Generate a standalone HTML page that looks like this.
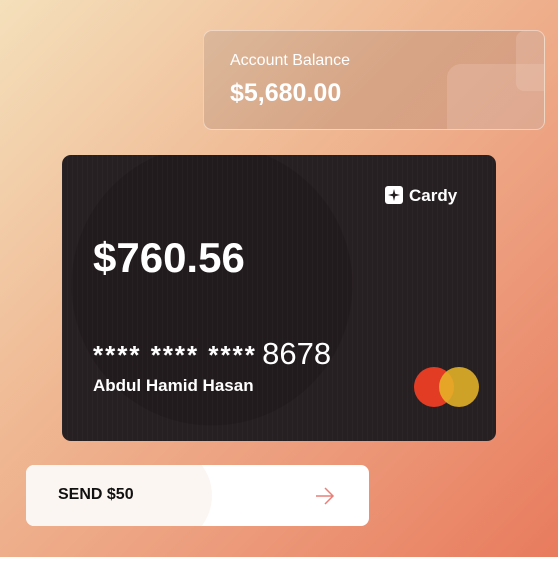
<!DOCTYPE html>
<html><head><style>
html,body{margin:0;padding:0;width:558px;height:565px;background:#fff;overflow:hidden;font-family:"Liberation Sans",sans-serif}
.bg{position:absolute;left:0;top:0;width:558px;height:557px;background:linear-gradient(135deg,#f4e0bb 0%,#efb893 40%,#ec9a7a 70%,#e87b5d 100%)}
.acc{position:absolute;left:203px;top:30px;width:342px;height:100px;border-radius:9px;background:linear-gradient(135deg,#dcb89a 0%,#d7a586 50%,#d89c81 100%);border:1.5px solid rgba(255,240,230,.6);box-sizing:border-box;overflow:hidden}
.acc .s1{position:absolute;left:243px;top:33px;width:120px;height:80px;border-radius:14px;background:rgba(255,230,215,.18)}
.acc .s2{position:absolute;left:312px;top:0;width:40px;height:60px;border-radius:8px;background:rgba(255,230,215,.18)}
.acc .t{position:absolute;left:26px;top:21px;color:#fff;font-size:16px}
.acc .v{position:absolute;left:26px;top:48px;color:#fff;font-size:25px;font-weight:bold}
.card{position:absolute;left:62px;top:155px;width:434px;height:286px;border-radius:9px;overflow:hidden;
background-image:repeating-linear-gradient(90deg,rgba(255,255,255,.025) 0 1px,transparent 1px 5px),radial-gradient(circle at 150px 130px,#221b1d 0 140px,transparent 141px);background-color:#272022}
.logo{position:absolute;left:323px;top:31px;color:#fff;font-weight:bold;font-size:17px}
.logo i{display:inline-block;width:18px;height:18px;background:#fff;border-radius:3px;vertical-align:-3px;margin-right:6px;position:relative}
.amt{position:absolute;left:31px;top:79px;color:#fff;font-size:42px;font-weight:bold}
.num{position:absolute;left:31px;top:181px;color:#fff;font-size:26px;letter-spacing:2px;font-weight:bold;white-space:nowrap}
.num b{font-size:31px;font-weight:normal;letter-spacing:0;margin-left:-4px}
.name{position:absolute;left:31px;top:221px;color:#fff;font-size:17px;font-weight:bold}
.c{position:absolute;width:40px;height:40px;border-radius:50%;top:212px}
.btn{position:absolute;left:26px;top:465px;width:343px;height:61px;border-radius:8px;background:#fff;overflow:hidden}
.btn .h{position:absolute;left:-20px;top:-20px;width:206px;height:101px;border-radius:0 60px 60px 0;background:#fcf6f3}
.btn span{position:absolute;left:32px;top:21px;font-size:16px;font-weight:bold;color:#111}
</style></head><body>
<div class="bg"></div>
<div class="acc"><div class="s1"></div><div class="s2"></div><div class="t">Account Balance</div><div class="v">$5,680.00</div></div>
<div class="card">
<div class="logo"><i><svg width="18" height="18" viewBox="0 0 18 18" style="position:absolute;left:0;top:0"><path d="M9 3 L10.2 7.8 L15 9 L10.2 10.2 L9 15 L7.8 10.2 L3 9 L7.8 7.8 Z" fill="#241d20"/></svg></i>Cardy</div>
<div class="amt">$760.56</div>
<div class="num">**** **** **** <b>8678</b></div>
<div class="name">Abdul Hamid Hasan</div>
<div class="c" style="left:352px;background:#e23c24"></div>
<div class="c" style="left:377px;background:rgba(230,180,40,.88)"></div>
</div>
<div class="btn"><div class="h"></div><span>SEND $50</span>
<svg style="position:absolute;left:288px;top:21px" width="22" height="20" viewBox="0 0 22 20"><path d="M2 10 H19 M11 2 L19 10 L11 18" stroke="#ea7f78" stroke-width="1.5" fill="none"/></svg></div>
</body></html>
